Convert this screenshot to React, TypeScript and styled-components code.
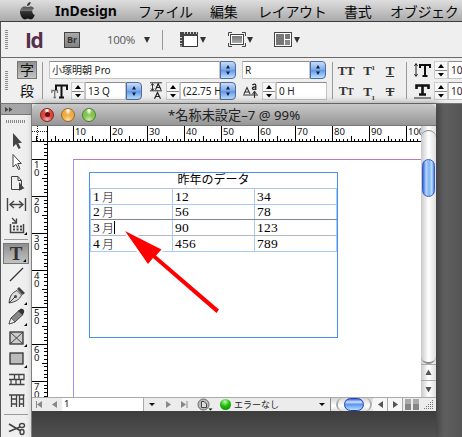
import React from "react";
import styled, { createGlobalStyle } from "styled-components";

const GlobalStyle = createGlobalStyle`
  * { box-sizing: border-box; }
  html, body { margin: 0; padding: 0; overflow: hidden; }
  body { font-family: "Open Sans", "Noto Sans CJK JP", sans-serif; color: #111; }
  svg { display: block; flex: none; }
`;

const Screen = styled.div`
  width: 462px;
  height: 437px;
  overflow: hidden;
  display: flex;
  flex-direction: column;
  background: #565656;
`;

/* ---------- menu bar ---------- */

const MenuBar = styled.div`
  flex: none;
  height: 22px;
  display: flex;
  align-items: center;
  padding-left: 19px;
  border-bottom: 1px solid #3c3c3c;
  background: linear-gradient(#dedede, #aaa);
`;

const MenuItem = styled.span<{ $w: number; $bold?: boolean }>`
  flex: none;
  width: ${(p) => p.$w}px;
  font-size: 14px;
  line-height: 20px;
  font-weight: ${(p) => (p.$bold ? 700 : 400)};
  font-family: ${(p) => (p.$bold ? '"Noto Sans", sans-serif' : '"Noto Sans CJK JP", sans-serif')};
  letter-spacing: ${(p) => (p.$bold ? "-0.05px" : "-0.3px")};
  white-space: nowrap;
  color: #080808;
`;

/* ---------- application bar ---------- */

const AppBar = styled.div`
  flex: none;
  height: 36px;
  display: flex;
  align-items: center;
  padding: 0 0 0 4px;
  border-left: 1px solid #555;
  border-bottom: 1px solid #6a6a6a;
  background: #efefef;
`;

const Grip = styled.div<{ $right: number }>`
  flex: none;
  width: 3px;
  height: 19px;
  margin-right: ${(p) => p.$right}px;
  background: repeating-linear-gradient(#8b8b8b 0 1px, #efefef 1px 2px);
`;

const IdLogo = styled.div`
  width: 39px;
  font: 700 21px/22px "Open Sans", sans-serif;
  letter-spacing: -1.4px;
  color: #55304a;
`;

const BridgeButton = styled.div`
  width: 16px;
  height: 16px;
  border: 1px solid #444;
  background: linear-gradient(#aaa, #828282);
  font: 700 9px/13px "Open Sans", sans-serif;
  text-align: center;
  color: #333;
`;

const Zoom = styled.div`
  width: 37px;
  margin-left: 27px;
  font: 11.5px/16px "Open Sans", sans-serif;
  letter-spacing: -0.3px;
  color: #555;
`;

const Caret = styled.div<{ $m?: string; $small?: boolean }>`
  flex: none;
  width: 0;
  height: 0;
  margin: ${(p) => p.$m ?? "0"};
  border: ${(p) => (p.$small ? "3px" : "3.5px")} solid transparent;
  border-top: ${(p) => (p.$small ? "3.5px solid #111" : "6px solid #333")};
  border-bottom: 0;
`;

const BarRule = styled.div<{ $h: number; $m: string }>`
  flex: none;
  width: 1px;
  height: ${(p) => p.$h}px;
  margin: ${(p) => p.$m};
  background: #999;
`;

/* ---------- control panel ---------- */

const ControlBar = styled.div`
  flex: none;
  height: 46px;
  display: flex;
  align-items: center;
  padding-left: 4px;
  border-left: 1px solid #555;
  border-bottom: 1px solid #777;
  background: #efefef;
`;

const TwoRows = styled.div<{ $w: number }>`
  flex: none;
  width: ${(p) => p.$w}px;
  height: 40px;
  display: grid;
  grid-template-rows: 18px 18px;
  row-gap: 3px;
`;

const ControlRow = styled.div`
  display: flex;
  align-items: center;
  min-width: 0;
`;

const ModeButton = styled.div<{ $on?: boolean }>`
  width: 20px;
  height: 18px;
  border: 1px solid ${(p) => (p.$on ? "#777" : "transparent")};
  background: ${(p) => (p.$on ? "linear-gradient(#919191, #c4c4c4)" : "none")};
  font: 14px/15px "Noto Sans CJK JP", sans-serif;
  text-align: center;
`;

const Field = styled.div<{ $w: number }>`
  flex: none;
  width: ${(p) => p.$w}px;
  height: 18px;
  padding-left: 2px;
  border: 1px solid #c4c4c4;
  border-top-color: #8d8d8d;
  background: #fff;
  font: 10px/16px "Noto Sans", "Noto Sans CJK JP", sans-serif;
  white-space: nowrap;
  color: #222;
`;

const BlueButton = styled.div`
  flex: none;
  width: 16px;
  height: 18px;
  display: flex;
  align-items: center;
  justify-content: center;
  border: 1px solid #4d6ba5;
  border-radius: 0 4px 4px 0;
  background: linear-gradient(#c9dcf6, #79a7e8 50%, #5f95e2 51%, #bfe0ff);
`;

const Stepper = styled.div`
  flex: none;
  width: 14px;
  height: 18px;
  display: flex;
  align-items: center;
  justify-content: center;
  border: 1px solid #ccc;
  background: #f7f7f7;
`;

const Slot = styled.div<{ $w: number; $ml?: number }>`
  flex: none;
  width: ${(p) => p.$w}px;
  margin-left: ${(p) => p.$ml ?? 0}px;
`;

const StyleGrid = styled.div`
  flex: none;
  width: 66px;
  display: grid;
  grid-template-columns: 24px 22px 20px;
  grid-template-rows: 21px 21px;
  align-items: center;
  justify-items: center;
`;

const Glyph = styled.span<{ $deco?: string }>`
  font: 700 13px/15px "Liberation Serif", serif;
  text-decoration: ${(p) => p.$deco ?? "none"};
  letter-spacing: -0.3px;
  color: #333;
  small { font-size: 10px; }
  sup, sub { font-size: 7px; line-height: 0; }
`;

/* ---------- workspace ---------- */

const Workspace = styled.div`
  flex: 1;
  min-height: 0;
  display: flex;
  align-items: flex-start;
  background: linear-gradient(90deg, #4f4f4f 0, #555 94%, #616161 96%, #545454 100%);
`;

const ToolPanel = styled.div`
  flex: none;
  width: 32px;
  height: 333px;
  display: flex;
  flex-direction: column;
  border-left: 1px solid #555;
  border-right: 1px solid #8a8a8a;
  background: #efefef;
`;

const PanelHeader = styled.div`
  flex: none;
  height: 11px;
  padding: 3px 0 0 4px;
  border-bottom: 1px solid #777;
  background: #a6a6a6;
`;

const PanelGrip = styled.div`
  flex: none;
  width: 20px;
  height: 3px;
  margin: 5px 0 8px 5px;
  background: repeating-linear-gradient(90deg, #888 0 1px, #efefef 1px 2px);
`;

const Tool = styled.div<{ $on?: boolean }>`
  position: relative;
  flex: none;
  width: 26px;
  height: 21px;
  margin-left: 2px;
  display: flex;
  align-items: center;
  justify-content: center;
  border: ${(p) => (p.$on ? "1px solid #777" : "0")};
  background: ${(p) => (p.$on ? "linear-gradient(#8f8f8f, #c2c2c2)" : "none")};
`;

const Flyout = styled.i`
  position: absolute;
  right: 2px;
  bottom: 1px;
  border-left: 3px solid transparent;
  border-bottom: 3px solid #000;
`;

const ToolRule = styled.div`
  flex: none;
  height: 1px;
  margin: 3px 3px 3px;
  background: #999;
`;

const TypeGlyph = styled.span`
  font: 700 19px/19px "Liberation Serif", serif;
  color: #333;
`;

const Desk = styled.div`
  flex: none;
  width: 404px;
  height: 333px;
  background: linear-gradient(#ddd 0 4px, transparent 4px 306px, #3d3d3d 307px, #515151);
  box-shadow: 3px 0 8px rgba(50, 50, 50, 0.6);
`;

const DocWindow = styled.div`
  width: 404px;
  height: 307px;
  display: flex;
  flex-direction: column;
  border-radius: 5px 5px 0 0;
  overflow: hidden;
  background: #fff;
`;

const TitleBar = styled.div`
  flex: none;
  height: 22px;
  display: flex;
  align-items: center;
  padding-left: 8px;
  border-bottom: 1px solid #777;
  background: linear-gradient(#c9c9c9, #969696);
`;

const Light = styled.div<{ $c: string; $d: string }>`
  flex: none;
  width: 14px;
  height: 14px;
  margin-right: 7px;
  border: 1px solid ${(p) => p.$d};
  border-radius: 50%;
  background: radial-gradient(ellipse at 50% 8%, #fff 0 8%, transparent 34%),
    radial-gradient(circle at 50% 90%, #fff9 0, transparent 40%), ${(p) => p.$c};
  display: flex;
  align-items: center;
  justify-content: center;
`;

const ModifiedDot = styled.div`
  width: 5px;
  height: 5px;
  border-radius: 50%;
  background: #6b1010;
`;

const Title = styled.div`
  margin-left: 65px;
  font: 13.2px/20px "Noto Sans", "Noto Sans CJK JP", sans-serif;
  white-space: nowrap;
  color: #222;
`;

const DocBody = styled.div`
  flex: none;
  height: 271px;
  display: flex;
`;

const DocMain = styled.div`
  flex: none;
  width: 389px;
  overflow: hidden;
`;

const TopRuler = styled.div`
  height: 16px;
  display: flex;
  border-bottom: 1px solid #000;
  overflow: hidden;
`;

const RulerCorner = styled.div`
  flex: none;
  width: 16px;
  height: 16px;
  border-right: 1px solid #000;
`;

const HUnit = styled.div<{ $w: number }>`
  flex: none;
  width: ${(p) => p.$w}px;
  display: flex;
  flex-direction: column;
`;

const HLabel = styled.span<{ $on: boolean }>`
  height: 11px;
  padding-left: 1px;
  border-left: ${(p) => (p.$on ? "1px solid #000" : "0")};
  font: 9.5px/11px "Noto Sans", sans-serif;
  color: #111;
`;

const BelowRuler = styled.div`
  display: flex;
  height: 255px;
`;

const LeftRuler = styled.div`
  flex: none;
  width: 16px;
  height: 255px;
  overflow: hidden;
  border-right: 1px solid #000;
`;

const VUnit = styled.div<{ $h: number; $on: boolean }>`
  height: ${(p) => p.$h}px;
  display: flex;
  justify-content: space-between;
  border-top: ${(p) => (p.$on ? "1px solid #000" : "0")};
`;

const VLabel = styled.span`
  width: 8px;
  padding: 1px 0 0 2px;
  font: 9.5px/8px "Noto Sans", sans-serif;
  word-break: break-all;
`;

const Canvas = styled.div`
  flex: 1;
  padding: 17px 0 0 25px;
  background: #fff;
`;

const Page = styled.div`
  height: 238px;
  padding: 12px 0 0 15px;
  border-top: 1px solid #c078ae;
  border-left: 1px solid #9c94e8;
`;

const TextFrame = styled.div`
  width: 249px;
  height: 166px;
  border: 1px solid #4a90ed;
`;

const Caption = styled.div`
  height: 15px;
  font: 12px/11px "Noto Sans CJK JP", sans-serif;
  text-align: center;
  color: #000;
`;

const Table = styled.div`
  width: 247px;
  border-left: 1px solid #a4cbfa;
`;

const Row = styled.div<{ $h: number; $line: string }>`
  height: ${(p) => p.$h}px;
  display: grid;
  grid-template-columns: 82px 82px 82px;
  border-top: 1px solid ${(p) => p.$line};
`;

const Cell = styled.div`
  display: flex;
  align-items: center;
  padding-left: 2px;
  border-right: 1px solid #a4cbfa;
  font: 13.5px/14px "Liberation Serif", "Noto Sans CJK JP", serif;
  letter-spacing: 0.2px;
  color: #000;
`;

const Kanji = styled.span`
  font: 300 12px/14px "Noto Sans CJK JP", sans-serif;
  margin-left: 2px;
`;

const TextCursor = styled.span`
  width: 1px;
  height: 13px;
  background: #000;
`;

const VScroll = styled.div`
  flex: none;
  width: 15px;
  height: 271px;
  display: flex;
  flex-direction: column;
  align-items: center;
  background: linear-gradient(90deg, #c9c9c9, #fff 50%, #dedede);
`;

const VCap = styled.div<{ $bottom?: boolean }>`
  width: 15px;
  height: 9px;
  margin-top: ${(p) => (p.$bottom ? 158 : 4)}px;
  border: 1px solid #888;
  border-width: ${(p) => (p.$bottom ? "0 0 2px" : "1px 0 0")};
  border-radius: ${(p) => (p.$bottom ? "0 0 8px 8px" : "8px 8px 0 0")};
`;

const VThumb = styled.div`
  width: 13px;
  height: 39px;
  margin-top: 20px;
  border: 1px solid #315dcc;
  border-radius: 7px;
  background: linear-gradient(90deg, #3a67df, #b7d8fc 30%, #7fb1f6 55%, #b8e0ff 80%, #4d7de0);
`;

const ScrollCell = styled.div<{ $h: number }>`
  width: 15px;
  height: ${(p) => p.$h}px;
  display: flex;
  align-items: center;
  justify-content: center;
  border-top: 1px solid #aaa;
`;

const StatusBar = styled.div`
  flex: none;
  height: 14px;
  display: flex;
  align-items: center;
  background: #ececec;
  border-top: 1px solid #aaa;
`;

const NavCell = styled.div<{ $w: number }>`
  flex: none;
  width: ${(p) => p.$w}px;
  display: flex;
  align-items: center;
  justify-content: center;
`;

const PageField = styled.div`
  flex: none;
  width: 82px;
  height: 13px;
  padding-left: 2px;
  border-right: 1px solid #aaa;
  background: #fff;
  font: 9.5px/12px "Noto Sans", sans-serif;
`;

const StatusDot = styled.div`
  flex: none;
  width: 11px;
  height: 11px;
  margin-right: 3px;
  border-radius: 50%;
  background: radial-gradient(circle at 45% 25%, #b7ffa0, #22b80d 45%, #078200);
`;

const StatusText = styled.div`
  flex: none;
  width: 85px;
  font: 9px/12px "Noto Sans CJK JP", sans-serif;
  color: #222;
`;

const HTrack = styled.div`
  flex: none;
  width: 43px;
  height: 13px;
  margin-left: 5px;
  padding-left: 5px;
  display: flex;
  background: linear-gradient(#d4d4d4, #fff 60%, #ddd);
  border-left: 1px solid #888;
`;

const HPill = styled.div`
  width: 36px;
  height: 13px;
  padding: 0 6px;
  border: 1px solid #aaa;
  border-width: 0 2px;
  border-radius: 8px;
`;

const HThumb = styled.div`
  height: 13px;
  border: 1px solid #1c3fb4;
  border-radius: 7px;
  background: linear-gradient(#3f63dd, #d0e5ff 28%, #5c93f0 48%, #b2e0ff);
`;

const HArrow = styled.div`
  flex: none;
  width: 15px;
  height: 13px;
  display: flex;
  align-items: center;
  justify-content: center;
  border-right: 1px solid #aaa;
  background: #f6f6f6;
`;

const SplitHandles = styled.div`
  flex: none;
  display: flex;
  gap: 2px;
  margin: 0 5px 0 2px;
`;

const SplitHandle = styled.div`
  width: 6px;
  height: 11px;
  background: linear-gradient(#aaa 50%, #858585 50%);
`;

const Pointer = styled.svg`
  position: absolute;
  left: 120px;
  top: 226px;
`;

/* ---------- drawings ---------- */

const Apple = () => (
  <svg width="36" height="18" viewBox="0 0 36 18">
    <defs>
      <linearGradient id="ap" x1="0" y1="0" x2="0" y2="1">
        <stop offset="0" stopColor="#222" />
        <stop offset=".5" stopColor="#777" />
        <stop offset=".55" stopColor="#333" />
        <stop offset="1" stopColor="#111" />
      </linearGradient>
    </defs>
    <path fill="url(#ap)" d="M9 5C10.3 4.3 13.6 3.7 15.1 6.4 12.2 8 12.8 11.7 15.8 13 14.7 16 13 18 11 17.3 9.3 16.7 8.3 16.7 6.8 17.3 4 18.3 1 13.8 1 10 1 5.5 5 3.7 8 5zM8 4.3C7.8 2 9.3.4 11.6 0 11.8 2.2 10.2 4.3 8 4.3z" />
  </svg>
);

const UpDown = () => (
  <svg width="6" height="12" viewBox="0 0 6 12">
    <path d="M3 1 5 4.5H1zM3 11 1 7.5H5z" fill="#0b1f4b" />
  </svg>
);

const Steps = () => (
  <svg width="12" height="16" viewBox="0 0 12 16">
    <path d="M0 8.5H12" stroke="#888" />
    <path d="M6 2 9 6H3zM6 14.5 3 11H9z" fill="#000" />
  </svg>
);

const ViewIcon = () => (
  <svg width="18" height="15" viewBox="0 0 18 15">
    <path d="M.5 4V.5H17.500V14.500H.5V4" fill="#fff" stroke="#333" />
    <path d="M0 0H18V4H4V15H0z" fill="#444" />
    <path d="M4.500 0V2M7.500 0V2M10.500 0V2M13.500 0V2M16.500 0V2M0 5.500H2M0 8.500H2M0 11.500H2M0 14H2" stroke="#ccc" />
  </svg>
);

const ScreenIcon = () => (
  <svg width="18" height="15" viewBox="0 0 18 15">
    <defs>
      <linearGradient id="sg" x1="0" y1="0" x2="0" y2="1">
        <stop offset="0" stopColor="#777" />
        <stop offset="1" stopColor="#aaa" />
      </linearGradient>
    </defs>
    <path d="M.5 4V.5H4M14 .5H17.500V4M17.500 11V14.500H14M4 14.500H.5V11" fill="none" stroke="#444" />
    <rect x="2.500" y="2.500" width="13" height="10" fill="#fff" stroke="#444" />
    <rect x="4" y="4" width="10" height="7" fill="url(#sg)" />
  </svg>
);

const ArrangeIcon = () => (
  <svg width="18" height="15" viewBox="0 0 18 15">
    <rect x=".5" y=".5" width="17" height="14" fill="#fff" stroke="#444" />
    <rect x="2" y="2" width="8" height="11" fill="#777" />
    <rect x="11" y="2" width="5" height="5" fill="#777" />
    <rect x="11" y="8" width="5" height="5" fill="#888" />
  </svg>
);

const SizeIcon = () => (
  <svg width="17" height="16" viewBox="0 0 17 16">
    <path d="M.8 10V7.500H6.500V10M3.700 8V14M2.400 14.500H5" fill="none" stroke="#777" strokeWidth="1.300" />
    <path d="M5 7V2.500H16V7M10.500 3V14M8 14.500H13" fill="none" stroke="#111" strokeWidth="2" />
  </svg>
);

const LeadingIcon = () => (
  <svg width="14" height="18" viewBox="0 0 14 18">
    <path d="M0 .8H12M0 8.800H12M2.500 2V8M1 3.500 2.500 1.500 4 3.500M1 6.500 2.500 8.500 4 6.500" fill="none" stroke="#333" />
    <path d="M5.500 7.800 8.200 1.800 11 7.800M6.500 5.500H10M4.500 16.800 7.500 10.500 10.500 16.800M6 14.500H9.200" fill="none" stroke="#222" strokeWidth="1.200" />
  </svg>
);

const BaselineIcon = () => (
  <svg width="15" height="16" viewBox="0 0 15 16">
    <path d="M1 11 4 4.500 7 11M2 9H6M0 12H15M11.500 15V9M9.500 11 11.500 8.500 13.500 11" fill="none" stroke="#333" strokeWidth="1.100" />
    <path d="M9.300 2Q12.500 0 12.800 2.500V7M12.700 4C8 3.500 8.500 8 12.700 5.800" fill="none" stroke="#222" strokeWidth="1.200" />
  </svg>
);

const ScaleIcon = ({ wide }: { wide?: boolean }) => (
  <svg width="17" height="16" viewBox="0 0 17 16">
    {wide ? (
      <path d="M2.500 6V2.500H14.500V6M8.500 3V11.500M5 11.500H12" fill="none" stroke="#111" strokeWidth="2.600" />
    ) : (
      <path d="M6 6V3H16V6M11 3V14M8.500 14H13.500" fill="none" stroke="#111" strokeWidth="2" />
    )}
    {wide ? (
      <path d="M0 15H17" stroke="#222" />
    ) : (
      <path d="M2 2V14M.5 4 2 1.500 3.500 4M.5 12 2 14.500 3.500 12" fill="none" stroke="#222" />
    )}
  </svg>
);

const toolIcons: Record<string, React.ReactNode> = {
  select: <path d="M7 2V16L10 13 12.500 18 14.700 17 12.300 12H16z" fill="#444" />,
  direct: <path d="M7 2.500V15L10 12.300 12.500 17.500 14 16.800 11.700 11.500H15.300z" fill="#fff" stroke="#444" />,
  page: (
    <>
      <path d="M5.500 3.500H12L15.500 7.500V16.500H5.500zM12 3.500V7.500H15.500" fill="none" stroke="#444" />
      <path d="M13 9V18L15 16.300 18.500 15.500z" fill="#444" />
    </>
  ),
  gap: <path d="M1.500 4V17M19.500 4V17M4 10.500H17M8 7 4 10.500 8 14M13 7 17 10.500 13 14" fill="none" stroke="#444" strokeWidth="1.400" />,
  place: (
    <>
      <path d="M4.500 9V17.500H17.500V9" fill="none" stroke="#444" strokeWidth="1.500" />
      <path d="M7 11.500H16M7 14.500H16" stroke="#444" strokeWidth="2" strokeDasharray="2 1.500" />
      <path d="M6 3 10 7M10.500 3.500V8H6" fill="none" stroke="#444" strokeWidth="1.300" />
    </>
  ),
  line: <path d="M4 17 17 4" stroke="#333" strokeWidth="1.300" />,
  pen: (
    <>
      <path d="M3 18C4 10 6 8 11 5.500L15.500 10C13.500 15 9 17 3 18z" fill="#ddd" stroke="#444" />
      <path d="M3 18 9 12" stroke="#444" />
      <circle cx="9.500" cy="11.500" r="1.500" fill="#444" />
      <path d="M11 4 13 2 19 8 16.500 10z" fill="#444" />
    </>
  ),
  pencil: (
    <>
      <path d="M3 18 5 12 13 4.500 17 8.500 9 16z" fill="#888" stroke="#444" />
      <path d="M3 18 5 12 9 16z" fill="#eee" stroke="#444" strokeWidth=".7" />
      <path d="M12 5 15 2.500Q19 3 18 6.500L16.500 9z" fill="#333" />
    </>
  ),
  frame: (
    <>
      <rect x="4" y="5" width="13" height="12" fill="#ccc" stroke="#333" strokeWidth="1.300" />
      <path d="M4 5 17 17M17 5 4 17" stroke="#444" />
    </>
  ),
  rect: <rect x="4" y="5" width="13" height="11" fill="#bbb" stroke="#333" strokeWidth="1.300" />,
  hgrid: <path d="M3 5.500H18.500M3 10.500H18.500M3 15.500H18.500M8.500 5V10.500M13 5V10.500M18 5V10.500M5 10.500V15.500M10 10.500V15.500M14.500 10.500V15.500" fill="none" stroke="#444" strokeWidth="1.300" />,
  vgrid: <path d="M3 5H18.500M5.500 5V17M10.500 5V17M13.500 5V17M17.500 5V17M5.500 9H10.500M5.500 14H10.500M13.500 9H17.500M13.500 14H17.500" fill="none" stroke="#444" strokeWidth="1.300" />,
  scissors: (
    <g fill="none" stroke="#444" strokeWidth="1.400">
      <path d="M3 6 14 12.500M3 13.500 14 9" strokeWidth="1.800" />
      <ellipse cx="16" cy="7.500" rx="2.500" ry="2" />
      <ellipse cx="16" cy="14" rx="2" ry="2.500" />
    </g>
  ),
};

const ToolIcon = ({ name }: { name: string }) => (
  <svg width="21" height="21" viewBox="0 0 21 21">
    {toolIcons[name]}
  </svg>
);

const Tri = ({ dir, bar, c = "#555" }: { dir: "l" | "r" | "u" | "d"; bar?: boolean; c?: string }) => {
  const d = { l: "M7 1V8L2 4.500z", r: "M2 1V8L7 4.500z", u: "M1.500 7H7.500L4.500 1.500z", d: "M1.500 2H7.500L4.500 7.500z" }[dir];
  return (
    <svg width="9" height="9" viewBox="0 0 9 9">
      <path d={d} fill={c} />
      {bar && <path d={dir === "l" ? "M1.500 1V8" : "M8 1V8"} stroke={c} />}
    </svg>
  );
};

const offsets = Array.from({ length: 10 }, (_, i) => i);

const HTicks = ({ from }: { from: number }) => (
  <svg width={37 - from} height="4" viewBox={`${from} 0 ${37 - from} 4`} shapeRendering="crispEdges" overflow="visible">
    {offsets.map((i) => {
      const big = i % 5 === 0;
      return <rect key={i} x={Math.round(i * 3.7)} y={big ? -1 : 2} width="1" height={big ? 5 : 2} />;
    })}
  </svg>
);

const VTicks = ({ from }: { from: number }) => (
  <svg width="5" height={36 - from} viewBox={`0 ${from} 5 ${36 - from}`} shapeRendering="crispEdges">
    {offsets.slice(1).map((i) => {
      const big = i % 5 === 0;
      return <rect key={i} x={big ? 0 : 2} y={Math.round(i * 3.7) - 1} width={big ? 5 : 3} height="1" />;
    })}
  </svg>
);

/* ---------- data ---------- */

const menus: [string, number][] = [
  ["ファイル", 72],
  ["編集", 48],
  ["レイアウト", 86],
  ["書式", 46],
  ["オブジェク", 71],
];

const tools: { name: string; fly?: boolean; on?: boolean; rule?: boolean }[] = [
  { name: "select" },
  { name: "direct" },
  { name: "page" },
  { name: "gap" },
  { name: "place", fly: true, rule: true },
  { name: "type", fly: true, on: true },
  { name: "line" },
  { name: "pen", fly: true },
  { name: "pencil", fly: true },
  { name: "frame", fly: true },
  { name: "rect", fly: true },
  { name: "hgrid" },
  { name: "vgrid", rule: true },
  { name: "scissors" },
];

const rows = [
  { m: "1", a: "12", b: "34", h: 16, line: "#b9c3da" },
  { m: "2", a: "56", b: "78", h: 15, line: "#a4cbfa" },
  { m: "3", a: "90", b: "123", h: 16, line: "#7d8795" },
  { m: "4", a: "456", b: "789", h: 16, line: "#b0b8c6" },
];

export default function App() {
  return (
    <>
      <GlobalStyle />
      <Screen>
        <MenuBar>
          <Apple />
          <MenuItem $w={83} $bold>InDesign</MenuItem>
          {menus.map(([t, w]) => (
            <MenuItem key={t} $w={w}>{t}</MenuItem>
          ))}
        </MenuBar>

        <AppBar>
          <Grip $right={17} />
          <IdLogo>Id</IdLogo>
          <BridgeButton>Br</BridgeButton>
          <Zoom>100%</Zoom>
          <Caret />
          <BarRule $h={20} $m="0 17px 0 12px" />
          <ViewIcon />
          <Caret $m="0 22px 0 2px" />
          <ScreenIcon />
          <Caret $m="0 21px 0 1px" />
          <ArrangeIcon />
          <Caret $m="0 0 0 2px" />
        </AppBar>

        <ControlBar>
          <Grip $right={9} />
          <TwoRows $w={25}>
            <ModeButton $on>字</ModeButton>
            <ModeButton>段</ModeButton>
          </TwoRows>
          <BarRule $h={37} $m="0 6px 0 0" />
          <TwoRows $w={193}>
            <ControlRow>
              <Field $w={171}>小塚明朝 Pro</Field>
              <BlueButton><UpDown /></BlueButton>
            </ControlRow>
            <ControlRow>
              <Slot $w={20} $ml={2}><SizeIcon /></Slot>
              <Stepper><Steps /></Stepper>
              <Field $w={41}>13 Q</Field>
              <BlueButton><UpDown /></BlueButton>
              <Slot $w={16} $ml={8}><LeadingIcon /></Slot>
              <Stepper><Steps /></Stepper>
              <Field $w={40}>(22.75 H</Field>
              <BlueButton><UpDown /></BlueButton>
            </ControlRow>
          </TwoRows>
          <TwoRows $w={85}>
            <ControlRow>
              <Field $w={68}>R</Field>
              <BlueButton><UpDown /></BlueButton>
            </ControlRow>
            <ControlRow>
              <Slot $w={19} $ml={1}><BaselineIcon /></Slot>
              <Stepper><Steps /></Stepper>
              <Field $w={51}>0 H</Field>
            </ControlRow>
          </TwoRows>
          <BarRule $h={37} $m="0 1px 0 5px" />
          <StyleGrid>
            <Glyph>TT</Glyph>
            <Glyph>T<sup>1</sup></Glyph>
            <Glyph $deco="underline">T</Glyph>
            <Glyph>T<small>T</small></Glyph>
            <Glyph>T<sub>1</sub></Glyph>
            <Glyph $deco="line-through">T</Glyph>
          </StyleGrid>
          <BarRule $h={37} $m="0 7px 0 6px" />
          <TwoRows $w={60}>
            <ControlRow>
              <Slot $w={20}><ScaleIcon /></Slot>
              <Stepper><Steps /></Stepper>
              <Field $w={40}>10</Field>
            </ControlRow>
            <ControlRow>
              <Slot $w={20}><ScaleIcon wide /></Slot>
              <Stepper><Steps /></Stepper>
              <Field $w={40}>10</Field>
            </ControlRow>
          </TwoRows>
        </ControlBar>

        <Workspace>
          <ToolPanel>
            <PanelHeader>
              <svg width="8" height="5" viewBox="0 0 8 5">
                <path d="M0 0 3.500 2.500 0 5zM4 0 7.500 2.500 4 5z" fill="#444" />
              </svg>
            </PanelHeader>
            <PanelGrip />
            {tools.map((t) => (
              <React.Fragment key={t.name}>
                <Tool $on={t.on}>
                  {t.name === "type" ? <TypeGlyph>T</TypeGlyph> : <ToolIcon name={t.name} />}
                  {t.fly && <Flyout />}
                </Tool>
                {t.rule && <ToolRule />}
              </React.Fragment>
            ))}
          </ToolPanel>

          <Desk>
            <DocWindow>
              <TitleBar>
                <Light $c="#dc4840" $d="#8c211c"><ModifiedDot /></Light>
                <Light $c="#efac42" $d="#9c6619" />
                <Light $c="#86c450" $d="#49822a" />
                <Title>*名称未設定–7 @ 99%</Title>
              </TitleBar>
              <DocBody>
                <DocMain>
                  <TopRuler>
                    <RulerCorner>
                      <svg width="15" height="16" viewBox="0 0 15 16">
                        <path d="M0 5.500H15M5.500 0V16" stroke="#222" strokeDasharray="1 1" />
                      </svg>
                    </RulerCorner>
                    <HUnit $w={25}>
                      <HLabel $on={false} />
                      <HTicks from={12} />
                    </HUnit>
                    {[10, 20, 30, 40, 50, 60, 70, 80, 90, 100].map((n) => (
                      <HUnit key={n} $w={37}>
                        <HLabel $on>{n}</HLabel>
                        <HTicks from={0} />
                      </HUnit>
                    ))}
                  </TopRuler>
                  <BelowRuler>
                    <LeftRuler>
                      <VUnit $h={17} $on={false}>
                        <VLabel />
                        <VTicks from={19} />
                      </VUnit>
                      {[10, 20, 30, 40, 50, 60, 70].map((n) => (
                        <VUnit key={n} $h={37} $on>
                          <VLabel>{n}</VLabel>
                          <VTicks from={0} />
                        </VUnit>
                      ))}
                    </LeftRuler>
                    <Canvas>
                      <Page>
                        <TextFrame>
                          <Caption>昨年のデータ</Caption>
                          <Table>
                            {rows.map((r) => (
                              <Row key={r.m} $h={r.h} $line={r.line}>
                                <Cell>
                                  {r.m}
                                  <Kanji>月</Kanji>
                                  {r.m === "3" && <TextCursor />}
                                </Cell>
                                <Cell>{r.a}</Cell>
                                <Cell>{r.b}</Cell>
                              </Row>
                            ))}
                            <Row $h={1} $line="#a4cbfa" />
                          </Table>
                        </TextFrame>
                      </Page>
                    </Canvas>
                  </BelowRuler>
                </DocMain>
                <VScroll>
                  <VCap />
                  <VThumb />
                  <VCap $bottom />
                  <ScrollCell $h={16}><Tri dir="u" /></ScrollCell>
                  <ScrollCell $h={17}><Tri dir="d" /></ScrollCell>
                </VScroll>
              </DocBody>
              <StatusBar>
                <NavCell $w={14}><Tri dir="l" bar c="#888" /></NavCell>
                <NavCell $w={16}><Tri dir="l" c="#888" /></NavCell>
                <PageField>1</PageField>
                <NavCell $w={16}><Caret $small /></NavCell>
                <NavCell $w={17}><Tri dir="r" c="#888" /></NavCell>
                <NavCell $w={12}><Tri dir="r" bar c="#888" /></NavCell>
                <NavCell $w={31}>
                  <svg width="16" height="13" viewBox="0 0 16 13">
                    <circle cx="6.500" cy="6.500" r="5.500" fill="#bbb" stroke="#666" />
                    <path d="M4.500 9.500V3.500H7L9.500 6V9.500z" fill="#ddd" stroke="#444" />
                    <path d="M11.500 10.500H15.500L13.500 12.500z" fill="#000" />
                  </svg>
                </NavCell>
                <StatusDot />
                <StatusText>エラーなし</StatusText>
                <Caret $small />
                <HTrack>
                  <HPill><HThumb /></HPill>
                </HTrack>
                <HArrow><Tri dir="l" /></HArrow>
                <HArrow><Tri dir="r" /></HArrow>
                <SplitHandles>
                  <SplitHandle />
                  <SplitHandle />
                </SplitHandles>
                <svg width="10" height="10" viewBox="0 0 10 10">
                  <path d="M8 .5H10M6 2.500H10M4 4.500H10M2 6.500H10M0 8.500H10" stroke="#777" strokeDasharray="1 1" />
                </svg>
              </StatusBar>
            </DocWindow>
          </Desk>
        </Workspace>
        <Pointer width="102" height="90" viewBox="0 0 102 90">
          <path d="M5 5 41.500 23.500 36.500 28.500 99 83.500 96 87 33.500 32 28 38z" fill="#fff" stroke="#fff" strokeWidth="4" />
          <path d="M5 5 41.500 23.500 36 29.500 99 83.500 96.500 87 33 32 28 38z" fill="#f00" />
        </Pointer>
      </Screen>
    </>
  );
}
